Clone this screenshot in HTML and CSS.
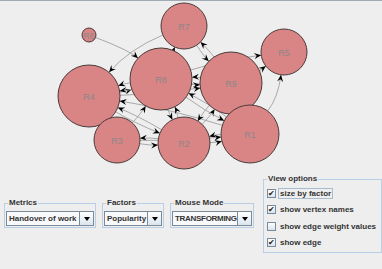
FILE: index.html
```html
<!DOCTYPE html>
<html lang="en">
<head>
  <meta charset="UTF-8" />
  <title>Social Network Viewer</title>
  <link rel="stylesheet" href="styles.css">
</head>
<body>

<div class="graph-panel">
  <svg id="graph" class="graph" width="382" height="171" viewBox="0 0 382 171"></svg>
</div>

<div class="controls">
  <div class="group">
    <div class="group-title">Metrics</div>
    <div class="combo combo-metrics">
      <span class="combo-text">Handover of work</span>
      <span class="combo-btn"></span>
    </div>
  </div>

  <div class="group">
    <div class="group-title">Factors</div>
    <div class="combo combo-factors">
      <span class="combo-text">Popularity</span>
      <span class="combo-btn"></span>
    </div>
  </div>

  <div class="group">
    <div class="group-title">Mouse Mode</div>
    <div class="combo combo-mode">
      <span class="combo-text tight">TRANSFORMING</span>
      <span class="combo-btn"></span>
    </div>
  </div>

  <div class="group view-options">
    <div class="group-title">View options</div>
    <div class="check-list">
      <div class="check-row">
        <span class="box checked"></span>
        <span class="check-label focused">size by factor</span>
      </div>
      <div class="check-row">
        <span class="box checked"></span>
        <span class="check-label">show vertex names</span>
      </div>
      <div class="check-row">
        <span class="box"></span>
        <span class="check-label">show edge weight values</span>
      </div>
      <div class="check-row">
        <span class="box checked"></span>
        <span class="check-label">show edge</span>
      </div>
    </div>
  </div>
</div>

<script src="graph.js"></script>

</body>
</html>
```

FILE: styles.css
```css
* {
  box-sizing: border-box;
}

body {
  margin: 0;
  padding: 0;
  background: #eeeeee;
  color: #333333;
  font-family: 'Liberation Sans', Arial, sans-serif;
  overflow: hidden;
}

.graph-panel {
  border-top: 1px solid #a2aab6;
  height: 172px;
}

.graph {
  display: block;
}

.graph .edge {
  fill: none;
  stroke: #a9a9a9;
  stroke-width: 1;
}

.graph .arrow {
  fill: #000;
}

.graph .node {
  fill: #d98585;
  stroke: #4a3b3b;
  stroke-width: 1;
}

.graph .label {
  fill: #8d8686;
  font-size: 9px;
  font-family: 'Liberation Sans', Arial, sans-serif;
}

.controls {
  display: flex;
  align-items: center;
  height: 87px;
  padding-left: 4px;
}

.group {
  margin-right: 6px;
  padding: 0 1px 1px 1px;
  border: 1px solid #b8cfe5;
}

/* title sits across the top border line */
.group-title {
  width: max-content;
  height: 10px;
  margin: -6px 0 0 2px;
  padding: 0 1px;
  background: #eeeeee;
  font-size: 8px;
  font-weight: bold;
  line-height: 10px;
  color: #333333;
}

.combo {
  display: flex;
  height: 15px;
  margin-top: 3px;
  border: 1px solid #7a8a99;
  background: #f8f9fb;
}

.combo-metrics {
  width: 88px;
}

.combo-factors {
  width: 58px;
}

.combo-mode {
  width: 80px;
}

.combo-text {
  flex: 1;
  overflow: hidden;
  white-space: nowrap;
  font-size: 8px;
  font-weight: bold;
  line-height: 13px;
  padding-left: 2px;
  color: #333333;
}

.combo-text.tight {
  letter-spacing: -0.3px;
}

.combo-btn {
  width: 14px;
  border-left: 1px solid #7a8a99;
  background: linear-gradient(#ffffff, #dbe5ef);
  display: flex;
  align-items: center;
  justify-content: center;
}

.combo-btn::after {
  content: "";
  border-left: 3px solid transparent;
  border-right: 3px solid transparent;
  border-top: 4px solid #000;
}

.view-options {
  height: 74px;
  margin-left: 3px;
  margin-right: 0;
  padding: 0 3px 1px 3px;
}

.view-options .group-title {
  margin-left: 0;
}

.check-list {
  padding-top: 2px;
}

.check-row {
  display: flex;
  align-items: center;
  height: 16.3px;
}

.box {
  flex: none;
  width: 9px;
  height: 9px;
  margin-right: 2px;
  border: 1px solid #7a8a99;
  background: linear-gradient(#fdfdfe, #d9e3ee);
  font-size: 8px;
  line-height: 7px;
  text-align: center;
  color: #1a1a1a;
}

.box.checked::after {
  content: "\2714";
}

.check-label {
  font-size: 8px;
  font-weight: bold;
  line-height: 9px;
  padding: 0 1px;
  border: 1px solid transparent;
  color: #333333;
  white-space: nowrap;
}

.check-label.focused {
  border-color: #a8bcd0;
}
```

FILE: graph.js
```js
// vertex positions: x, y, radius
const nodes = {
  R6: [89, 34, 7],
  R7: [184, 25, 23],
  R8: [161, 78, 31],
  R4: [89, 95, 31],
  R3: [117, 139, 23],
  R2: [184, 142, 26],
  R5: [284, 51, 23],
  R9: [231, 82, 31],
  R1: [250, 133, 29]
};

// source, target, bend
const edges = [
  ['R6', 'R8', -8],
  ['R7', 'R4', 14],
  ['R8', 'R7', 0],
  ['R7', 'R9', 4],
  ['R9', 'R7', 4],
  ['R9', 'R5', 4],
  ['R8', 'R5', -5],
  ['R1', 'R5', 12],
  ['R8', 'R4', 4],
  ['R4', 'R8', 4],
  ['R9', 'R4', 5],
  ['R4', 'R9', 5],
  ['R2', 'R4', 4],
  ['R4', 'R2', 4],
  ['R1', 'R4', 6],
  ['R4', 'R3', 0],
  ['R3', 'R2', 4],
  ['R2', 'R3', 4],
  ['R2', 'R8', 4],
  ['R8', 'R2', 4],
  ['R9', 'R2', 4],
  ['R2', 'R9', 4],
  ['R2', 'R1', 4],
  ['R1', 'R2', 4],
  ['R3', 'R1', 4],
  ['R8', 'R9', 4],
  ['R9', 'R8', 4],
  ['R8', 'R1', 4],
  ['R1', 'R8', 4],
  ['R3', 'R8', 4]
];

const svg = document.getElementById('graph');
const ns = 'http://www.w3.org/2000/svg';

function add(name, attrs, text) {
  const el = document.createElementNS(ns, name);
  for (const k in attrs) el.setAttribute(k, attrs[k]);
  if (text) el.textContent = text;
  svg.appendChild(el);
  return el;
}

function unit(x, y) {
  const l = Math.hypot(x, y) || 1;
  return [x / l, y / l];
}

edges.forEach(([s, t, bend]) => {
  const [ax, ay, ar] = nodes[s];
  const [bx, by, br] = nodes[t];
  const [dx, dy] = unit(bx - ax, by - ay);
  const cx = (ax + bx) / 2 - dy * bend;
  const cy = (ay + by) / 2 + dx * bend;

  const [ux, uy] = unit(cx - ax, cy - ay);
  const [vx, vy] = unit(cx - bx, cy - by);
  const sx = ax + ux * ar, sy = ay + uy * ar;
  const ex = bx + vx * br, ey = by + vy * br;

  add('path', { class: 'edge', d: `M${sx} ${sy} Q${cx} ${cy} ${ex} ${ey}` });

  // arrow head pointing into the target
  const [fx, fy] = [-vx, -vy];
  const px = -fy, py = fx;
  const pts = [
    [ex, ey],
    [ex - fx * 7 + px * 3, ey - fy * 7 + py * 3],
    [ex - fx * 4.5, ey - fy * 4.5],
    [ex - fx * 7 - px * 3, ey - fy * 7 - py * 3]
  ];
  add('polygon', { class: 'arrow', points: pts.map(p => p.join(',')).join(' ') });
});

Object.keys(nodes).forEach(name => {
  const [x, y, r] = nodes[name];
  add('circle', { class: 'node', cx: x, cy: y, r: r });
  add('text', { class: 'label', x: x, y: y + 3.5, 'text-anchor': 'middle' }, name);
});
```
